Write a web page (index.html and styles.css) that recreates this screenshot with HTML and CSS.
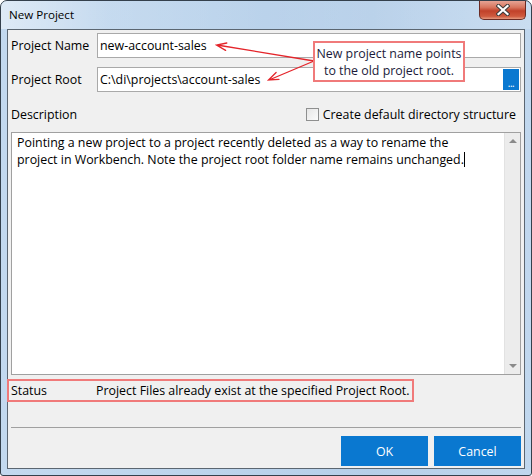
FILE: index.html
```html
<!DOCTYPE html>
<html>
<head>
<meta charset="utf-8">
<link rel="stylesheet" href="styles.css">
</head>
<body>
<div class="window">
  <div class="titlebar">
    <span class="title">New Project</span>
    <div class="close">
      <svg width="14" height="12" viewBox="0 0 14 12">
        <path d="M2.5 2 L11.5 10 M11.5 2 L2.5 10" stroke="#3b3b3b" stroke-width="4.2" stroke-linecap="square"/>
        <path d="M2.5 2 L11.5 10 M11.5 2 L2.5 10" stroke="#ffffff" stroke-width="2.2" stroke-linecap="square"/>
      </svg>
    </div>
  </div>
  <div class="client">
    <div class="row row-name">
      <span class="label">Project Name</span>
      <div class="input">new-account-sales</div>
    </div>
    <div class="row row-root">
      <span class="label">Project Root</span>
      <div class="input">
        <span class="input-text">C:\di\projects\account-sales</span>
        <span class="browse">...</span>
      </div>
    </div>
    <div class="desc-row">
      <span class="label">Description</span>
      <span class="check"><span class="box"></span>Create default directory structure</span>
    </div>
    <div class="memo">
      <div class="memo-text">Pointing a new project to a project recently deleted as a way to rename the<br>project in Workbench. Note the project root folder name remains unchanged.<span class="caret"></span></div>
      <div class="scroll">
        <span class="arrow-up"></span>
        <span class="arrow-down"></span>
      </div>
    </div>
    <div class="status">
      <span class="status-label">Status</span>
      <span class="status-text">Project Files already exist at the specified Project Root.</span>
    </div>
    <div class="sep"></div>
    <div class="buttons">
      <button class="btn">OK</button>
      <button class="btn">Cancel</button>
    </div>
  </div>
</div>
<svg class="arrows" width="532" height="476" viewBox="0 0 532 476">
  <g stroke="#e4252b" stroke-width="1.3" fill="none" stroke-linecap="round">
    <path d="M314 61 L217 45 M225.6 50.4 L216.5 45 L226.8 43"/>
    <path d="M314 61 L269 80 M279 79.4 L268.5 80 L276.1 72.5"/>
  </g>
</svg>
<div class="callout">New project name points<br>to the old project root.</div>
</body>
</html>
```
FILE: styles.css
```css
html, body {
  margin: 0;
  padding: 0;
}
body {
  width: 532px;
  height: 476px;
  position: relative;
  overflow: hidden;
  font-family: "Open Sans", "Noto Sans", sans-serif;
  font-size: 12.4px;
  color: #000;
  background: #fff;
}
.window {
  box-sizing: border-box;
  width: 532px;
  height: 476px;
  border: 1px solid #34404c;
  border-radius: 7px 7px 3px 3px;
  background: linear-gradient(to right, #c3d9ef 0%, #bcd4ec 40%, #b6cfe9 70%, #c0d7ee 100%);
  display: flex;
  flex-direction: column;
}
.titlebar {
  height: 28px;
  display: flex;
  align-items: flex-start;
  background: linear-gradient(to right, rgba(255,255,255,0.45) 0%, rgba(255,255,255,0.1) 20%, rgba(255,255,255,0) 50%, rgba(255,255,255,0.15) 100%);
  border-radius: 6px 6px 0 0;
}
.title {
  margin-left: 8px;
  line-height: 28px;
  font-size: 11.6px;
  color: #000;
}
.close {
  margin-left: auto;
  margin-right: 5px;
  width: 47px;
  height: 19px;
  box-sizing: border-box;
  border: 1px solid #6b2b24;
  border-top: none;
  border-radius: 0 0 5px 5px;
  background: linear-gradient(to bottom, #e6a394 0%, #d8765f 35%, #c1412a 55%, #cf5a3e 85%, #e59a80 100%);
  display: flex;
  align-items: center;
  justify-content: center;
}
.close svg {
  display: block;
}
.client {
  box-sizing: border-box;
  margin: 0 6px;
  height: 440px;
  border: 1px solid #5b6671;
  background: #f0f0f0;
  padding: 3px 3px 2px 3px;
  display: flex;
  flex-direction: column;
}
.row {
  display: flex;
  align-items: center;
  height: 25px;
}
.row-root {
  margin-top: 9px;
}
.label {
  width: 86px;
  flex: none;
}
.input {
  flex: 1;
  box-sizing: border-box;
  height: 25px;
  border: 1px solid #a9a9a9;
  background: #fff;
  padding: 1px 1px 1px 2px;
  display: flex;
  align-items: center;
}
.input-text {
  flex: 1;
}
.browse {
  align-self: stretch;
  width: 16px;
  background: #0a78d0;
  color: #fff;
  font-size: 10px;
  line-height: 1;
  display: flex;
  align-items: flex-end;
  justify-content: center;
  padding-bottom: 2px;
  box-sizing: border-box;
  letter-spacing: -0.5px;
}
.desc-row {
  margin-top: 12px;
  height: 20px;
  display: flex;
  align-items: center;
  justify-content: space-between;
}
.check {
  display: flex;
  align-items: center;
  margin-right: 5px;
}
.box {
  width: 13px;
  height: 13px;
  box-sizing: border-box;
  border: 1px solid #8e8f8f;
  background: linear-gradient(to bottom right, #e6e6e6, #fbfbfb);
  margin-right: 4px;
}
.memo {
  margin-top: 8px;
  height: 243px;
  box-sizing: border-box;
  border: 1px solid #a0a0a0;
  background: #fff;
  display: flex;
}
.memo-text {
  flex: 1;
  padding: 1px 5px 0 5px;
  line-height: 17.4px;
  color: #000;
}
.caret {
  display: inline-block;
  width: 1px;
  height: 15px;
  background: #000;
  vertical-align: -3px;
}
.scroll {
  width: 16px;
  background: #ececec;
  border-left: 1px solid #e2e2e2;
  box-sizing: border-box;
  display: flex;
  flex-direction: column;
  justify-content: space-between;
  align-items: center;
  padding: 6px 0 6px 0;
}
.arrow-up {
  width: 0;
  height: 0;
  border-left: 4px solid transparent;
  border-right: 4px solid transparent;
  border-bottom: 4px solid #8a8a8a;
}
.arrow-down {
  width: 0;
  height: 0;
  border-left: 4px solid transparent;
  border-right: 4px solid transparent;
  border-top: 4px solid #8a8a8a;
}
.status {
  margin-top: 4px;
  margin-left: -4px;
  align-self: flex-start;
  height: 23px;
  box-sizing: border-box;
  border: 2px solid #f07a7a;
  padding: 0 2px 0 2px;
  display: flex;
  align-items: center;
}
.status-label {
  width: 85px;
}
.sep {
  margin-top: 25px;
  height: 1px;
  background: #a0a0a0;
}
.buttons {
  margin-top: 8px;
  display: flex;
  justify-content: flex-end;
  gap: 6px;
}
.btn {
  width: 87px;
  height: 30px;
  border: none;
  background: #0a78d0;
  color: #fff;
  font-family: "Open Sans", "Noto Sans", sans-serif;
  font-size: 12.4px;
  padding: 0;
}
.arrows {
  position: absolute;
  left: 0;
  top: 0;
  pointer-events: none;
}
.callout {
  position: absolute;
  left: 313px;
  top: 41px;
  width: 152px;
  height: 41px;
  box-sizing: border-box;
  border: 2px solid #f07a7a;
  background: #fff;
  color: #1b1b3a;
  text-align: center;
  font-size: 12.4px;
  line-height: 17px;
  padding-top: 2px;
}
```
